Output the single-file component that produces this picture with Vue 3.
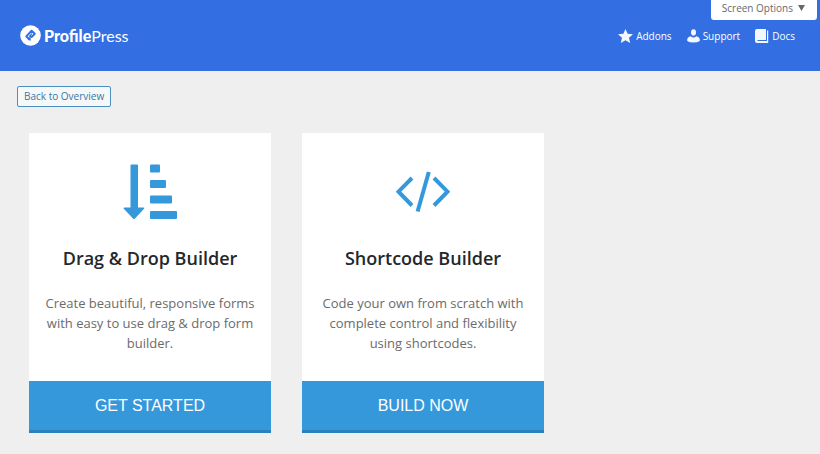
<script setup>
const cards = [
  {
    id: 'drag',
    title: 'Drag & Drop Builder',
    text: 'Create beautiful, responsive forms with easy to use drag & drop form builder.',
    action: 'Get Started',
  },
  {
    id: 'code',
    title: 'Shortcode Builder',
    text: 'Code your own from scratch with complete control and flexibility using shortcodes.',
    action: 'Build Now',
  },
]
</script>

<template>
  <div class="page">
    <header class="header">
      <a class="brand" href="#">
        <svg class="brand-mark" viewBox="0 0 21 21" aria-hidden="true">
          <circle cx="10.5" cy="10.5" r="10.3" fill="#fff" />
          <g fill="none" stroke="#336fe2" stroke-width="2" stroke-linejoin="round">
            <path d="M9.8 15 L6.3 11.4 L11.6 5.8 L14.8 8.8 L11.6 12.1 L9.8 10.6" />
            <path d="M9.2 11.6 L12 8.7" stroke-width="1.2" />
          </g>
          <path d="M8 12 L10.7 12.6 V16.2 Z" fill="#336fe2" />
        </svg>
        <span class="brand-name"><b>Profile</b>Press</span>
      </a>
      <nav class="nav">
        <a href="#">
          <svg width="15" height="14" viewBox="0 0 15 14" aria-hidden="true">
            <path d="M7.5 0 L9.6 4.8 L15 5.3 L11 8.8 L12.2 14 L7.5 11.3 L2.8 14 L4 8.8 L0 5.3 L5.4 4.8 Z" />
          </svg>
          Addons
        </a>
        <a href="#">
          <svg width="13" height="14" viewBox="0 0 13 14" aria-hidden="true">
            <ellipse cx="6.5" cy="3.4" rx="2.5" ry="3.1" />
            <path d="M3.6 7.2 Q6.5 10 9.4 7.2 Q12.6 8 12.8 10.8 V12 Q10.5 13.6 6.5 13.6 Q2.5 13.6 .2 12 V10.8 Q.4 8 3.6 7.2 Z" />
          </svg>
          Support
        </a>
        <a href="#">
          <svg width="14" height="14" viewBox="0 0 14 14" aria-hidden="true">
            <path d="M2 0 H11 V11 H2.5 V12 H12 V1.5 H13.2 V14 H2 Q0 14 0 12 V2 Q0 0 2 0 Z" />
          </svg>
          Docs
        </a>
      </nav>
      <button class="screen-options" type="button">
        Screen Options
        <svg width="7" height="6" viewBox="0 0 7 6" aria-hidden="true">
          <path d="M0 0 H7 L3.5 6 Z" />
        </svg>
      </button>
    </header>

    <main>
      <div class="toolbar">
        <a class="back" href="#">Back to Overview</a>
      </div>
      <div class="cards">
        <section v-for="card in cards" :key="card.id" class="card">
          <div class="card-body">
            <svg v-if="card.id === 'drag'" class="card-icon" viewBox="0 0 54 56" aria-hidden="true">
              <path
                d="M8.5 .5 H14 Q15 .5 15 1.5 V43.5 H20.5 Q22 43.5 21 44.7 L12 54.4 Q11 55.4 10 54.4 L.8 44.7 Q-.2 43.5 1.3 43.5 H7.5 V1.5 Q7.5 .5 8.5 .5 Z"
                fill="#3498db"
              />
              <g fill="#3498db">
                <rect x="27" y=".5" width="10" height="8" rx="1" />
                <rect x="27" y="16" width="16" height="8" rx="1" />
                <rect x="27" y="31.5" width="22" height="8" rx="1" />
                <rect x="27" y="47" width="27" height="8" rx="1" />
              </g>
            </svg>
            <svg v-else class="card-icon" viewBox="0 0 54 56" aria-hidden="true">
              <g fill="none" stroke="#3498db" stroke-width="4">
                <path d="M16 14 L2.5 27.7 L16 41.5" />
                <path d="M38 14 L51.5 27.7 L38 41.5" />
                <path d="M32.8 8 L21.6 47.5" />
              </g>
            </svg>
            <h2>{{ card.title }}</h2>
            <p>{{ card.text }}</p>
          </div>
          <button class="action" type="button">{{ card.action }}</button>
        </section>
      </div>
    </main>
  </div>
</template>

<style>
body {
  background: #efefef;
}
</style>

<style scoped>
.page {
  font-family: "Open Sans", "Noto Sans", sans-serif;
}
.header {
  position: relative;
  display: flex;
  align-items: center;
  justify-content: space-between;
  height: 71px;
  box-sizing: border-box;
  padding: 0 25px 0 20px;
  background: #336fe2;
  color: #fff;
}
a {
  color: inherit;
  text-decoration: none;
}
.brand {
  display: flex;
  align-items: center;
  gap: 3px;
}
.brand-mark {
  width: 21px;
  height: 21px;
}
.brand-name {
  font-family: Lato, sans-serif;
  font-size: 16px;
  line-height: 20px;
}
.brand-name b {
  font-weight: 900;
}
.nav {
  display: flex;
  gap: 15px;
}
.nav a {
  display: flex;
  align-items: center;
  gap: 3px;
  font-size: 10px;
  line-height: 16px;
}
.nav svg {
  fill: #f3f7fe;
}
.screen-options {
  position: absolute;
  top: 0;
  right: 3px;
  display: flex;
  align-items: center;
  gap: 5px;
  height: 20px;
  padding: 0 12px 4px 11px;
  border: 0;
  border-radius: 0 0 3px 3px;
  background: #fff;
  color: #646970;
  font: 10px/16px "Open Sans", "Noto Sans", sans-serif;
}
.screen-options svg {
  fill: #646970;
}
.toolbar {
  display: flex;
  padding: 15px 17px 26px;
}
.back {
  padding: 2px 6px;
  border: 1px solid #4a90c4;
  border-radius: 2px;
  background: #f6f7f7;
  color: #3579ae;
  font-size: 10px;
  line-height: 15px;
}
.cards {
  display: grid;
  grid-template-columns: repeat(3, 1fr);
  gap: 31px;
  padding: 0 3px 21px 29px;
}
.card {
  display: flex;
  flex-direction: column;
  background: #fff;
}
.card-body {
  flex: 1;
  display: flex;
  flex-direction: column;
  align-items: center;
  padding: 31px 14px 28px;
  text-align: center;
}
.card-icon {
  width: 54px;
  height: 56px;
}
h2 {
  margin: 24px 0 21px;
  color: #23282d;
  font-size: 18px;
  font-weight: 600;
  line-height: 28px;
}
p {
  margin: 0;
  color: #6b6b6b;
  font-size: 13px;
  line-height: 20px;
}
.action {
  height: 52px;
  border: 0;
  border-bottom: 3px solid #2a80b9;
  background: #3498db;
  color: #fff;
  font: 16px/20px "Liberation Sans", Arial, sans-serif;
  text-transform: uppercase;
}
</style>
